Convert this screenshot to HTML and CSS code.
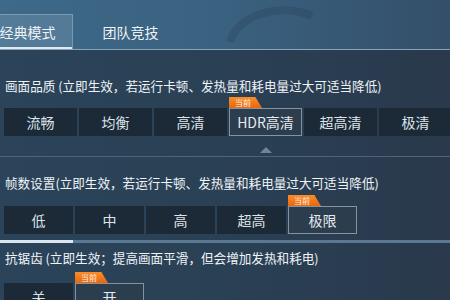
FILE: index.html
```html
<!DOCTYPE html>
<html lang="zh-CN">
<head>
    <meta charset="UTF-8">
    <meta name="viewport" content="width=device-width, initial-scale=1.0">
    <title>画面设置</title>
    <link rel="stylesheet" href="styles.css">
</head>
<body>
    <div class="screen">
        <div class="tabs">
            <svg class="deco" width="120" height="50" viewBox="0 0 120 50">
                <path d="M18 42 C 26 14, 70 2, 100 16" fill="none" stroke="rgba(22,38,55,0.16)" stroke-width="8"/>
            </svg>
            <div class="tab active">经典模式</div>
            <div class="tab">团队竞技</div>
        </div>

        <div class="section first">
            <div class="label">画面品质 (立即生效，若运行卡顿、发热量和耗电量过大可适当降低)</div>
            <div class="options quality">
                <div class="opt">流畅</div>
                <div class="opt">均衡</div>
                <div class="opt">高清</div>
                <div class="opt current"><span class="badge">当前</span>HDR高清</div>
                <div class="opt">超高清</div>
                <div class="opt">极清</div>
            </div>
            <div class="pointer-row">
                <span class="pointer"></span>
            </div>
        </div>

        <div class="section second">
            <div class="label">帧数设置(立即生效，若运行卡顿、发热量和耗电量过大可适当降低)</div>
            <div class="options">
                <div class="opt">低</div>
                <div class="opt">中</div>
                <div class="opt">高</div>
                <div class="opt">超高</div>
                <div class="opt current"><span class="badge">当前</span>极限</div>
            </div>
            <div class="track"><span class="thumb"></span></div>
        </div>

        <div class="section third">
            <div class="label">抗锯齿 (立即生效；提高画面平滑，但会增加发热和耗电)</div>
            <div class="options">
                <div class="opt">关</div>
                <div class="opt current"><span class="badge">当前</span>开</div>
            </div>
        </div>
    </div>
</body>
</html>
```

FILE: styles.css
```css
* {
    margin: 0;
    padding: 0;
    box-sizing: border-box;
    font-family: 'Noto Sans CJK SC', 'Noto Sans', sans-serif;
}

body {
    width: 450px;
    height: 300px;
    overflow: hidden;
    background-color: #2a3f53;
}

.screen {
    width: 450px;
    height: 300px;
    overflow: hidden;
    background: linear-gradient(90deg, #2b4459 0%, #2a4055 50%, #2a394c 100%);
}

.tabs {
    position: relative;
    height: 50px;
    display: flex;
    align-items: flex-end;
    gap: 12px;
    background: linear-gradient(90deg, #3e6988 0%, #3a6180 50%, #344f69 100%);
    border-bottom: 1px solid #8aa3b8;
}

.deco {
    position: absolute;
    left: 212px;
    top: 0;
}

.tab {
    position: relative;
    height: 35px;
    width: 91px;
    display: flex;
    align-items: center;
    justify-content: center;
    color: #eef3f7;
    font-size: 14px;
}

.tab.active {
    margin-left: -18px;
    background-color: rgba(200, 225, 240, 0.16);
    border: 1px solid rgba(190, 215, 230, 0.35);
    border-bottom: none;
    box-shadow: inset 0 -2px 0 #dfeaf2;
}

.section {
    padding-left: 4px;
}

.label {
    height: 18px;
    line-height: 18px;
    padding-left: 1px;
    color: #eef3f7;
    font-size: 12.6px;
    white-space: nowrap;
}

.first {
    padding-top: 27px;
    border-bottom: 1px solid #4d6579;
}

.second {
    padding-top: 17px;
}

.third {
    padding-top: 6px;
}

.options {
    display: flex;
    gap: 2px;
    margin-top: 14px;
}

.first .options {
    margin-top: 13px;
}

.third .options {
    margin-top: 16px;
}

.opt {
    position: relative;
    flex: 0 0 69px;
    height: 28px;
    display: flex;
    align-items: center;
    justify-content: center;
    background-color: #1c2a38;
    color: #dde3e8;
    font-size: 14px;
}

.quality .opt {
    flex-basis: 73px;
}

.opt.current {
    background-color: #2c3d4e;
    border: 1px solid #8593a0;
    color: #e6ebef;
}

.badge {
    position: absolute;
    left: -1px;
    top: -12px;
    width: 33px;
    height: 11px;
    padding-left: 6px;
    line-height: 11px;
    font-size: 8px;
    color: #fff3e6;
    background: linear-gradient(180deg, #f98d2a, #e9660f);
    clip-path: polygon(0 0, 80% 0, 100% 100%, 0 100%);
}

.pointer-row {
    height: 20px;
    padding-top: 11px;
    padding-left: 256px;
}

.pointer {
    display: block;
    width: 0;
    height: 0;
    border-left: 6px solid transparent;
    border-right: 6px solid transparent;
    border-bottom: 6px solid #6f8395;
}

.track {
    height: 3px;
    margin: 6px 0 0 -4px;
    background-color: #5b7893;
}

.thumb {
    display: block;
    width: 73px;
    height: 3px;
    background-color: #dbe6ee;
}
```
